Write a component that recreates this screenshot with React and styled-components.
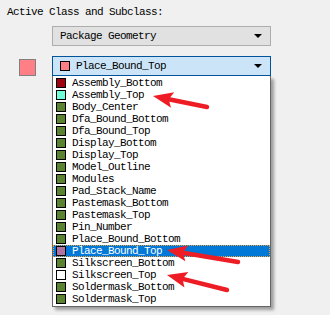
import styled, { createGlobalStyle } from "styled-components";

const GlobalStyle = createGlobalStyle`
  body {
    margin: 0;
    background: #f0f0f0;
    font-family: "Liberation Mono", "DejaVu Sans Mono", monospace;
  }
`;

const items = [
  { name: "Assembly_Bottom", color: "#a0000f" },
  { name: "Assembly_Top", color: "#6fffd9" },
  { name: "Body_Center", color: "#5b8231" },
  { name: "Dfa_Bound_Bottom", color: "#5b8231" },
  { name: "Dfa_Bound_Top", color: "#5b8231" },
  { name: "Display_Bottom", color: "#5b8231" },
  { name: "Display_Top", color: "#5b8231" },
  { name: "Model_Outline", color: "#5b8231" },
  { name: "Modules", color: "#5b8231" },
  { name: "Pad_Stack_Name", color: "#5b8231" },
  { name: "Pastemask_Bottom", color: "#5b8231" },
  { name: "Pastemask_Top", color: "#5b8231" },
  { name: "Pin_Number", color: "#5b8231" },
  { name: "Place_Bound_Bottom", color: "#5b8231" },
  { name: "Place_Bound_Top", color: "#b073a3", selected: true },
  { name: "Silkscreen_Bottom", color: "#5b8231" },
  { name: "Silkscreen_Top", color: "#ffffff" },
  { name: "Soldermask_Bottom", color: "#5b8231" },
  { name: "Soldermask_Top", color: "#5b8231" },
];

export default function App() {
  return (
    <Page>
      <GlobalStyle />
      <Label>Active Class and Subclass:</Label>
      <ClassRow>
        <Combo>
          <ComboText>Package Geometry</ComboText>
          <Caret />
        </Combo>
      </ClassRow>
      <SubclassRow>
        <BigSwatch />
        <Combo $active>
          <Swatch $color="#ff7f86" />
          <ComboText>Place_Bound_Top</ComboText>
          <Caret />
          <List>
            {items.map((it) => (
              <Item key={it.name} $selected={it.selected}>
                <Swatch $color={it.color} />
                <ItemText>{it.name}</ItemText>
              </Item>
            ))}
          </List>
        </Combo>
      </SubclassRow>
      <Arrows width="330" height="315" viewBox="0 0 330 315">
        <Arrow x1={207} y1={107} x2={153} y2={96} />
        <Arrow x1={238} y1={262} x2={167} y2={250} />
        <Arrow x1={227} y1={290} x2={167} y2={275} />
      </Arrows>
    </Page>
  );
}

function Arrow({ x1, y1, x2, y2 }) {
  const dx = x2 - x1;
  const dy = y2 - y1;
  const len = Math.hypot(dx, dy);
  const ux = dx / len;
  const uy = dy / len;
  const headLen = 20;
  const headW = 8;
  const bx = x2 - ux * headLen;
  const by = y2 - uy * headLen;
  const px = -uy;
  const py = ux;
  const pts = [
    [x2, y2],
    [bx + px * headW, by + py * headW],
    [bx + ux * 4, by + uy * 4],
    [bx - px * headW, by - py * headW],
  ]
    .map((p) => p.join(","))
    .join(" ");
  return (
    <g>
      <line
        x1={x1}
        y1={y1}
        x2={bx + ux * 4}
        y2={by + uy * 4}
        stroke="#ee1c25"
        strokeWidth="4.5"
        strokeLinecap="round"
      />
      <polygon points={pts} fill="#ee1c25" />
    </g>
  );
}

const Page = styled.div`
  position: relative;
  width: 330px;
  height: 315px;
  padding-top: 5px;
  box-sizing: border-box;
`;

const Label = styled.div`
  margin-left: 7px;
  height: 15px;
  font-size: 11px;
  letter-spacing: -0.6px;
  line-height: 15px;
  color: #000;
`;

const ClassRow = styled.div`
  display: flex;
  padding-left: 52px;
  margin-top: 6px;
`;

const SubclassRow = styled.div`
  display: flex;
  align-items: flex-start;
  padding-left: 19px;
  margin-top: 10px;
`;

const BigSwatch = styled.div`
  width: 15px;
  height: 15px;
  margin-top: 3px;
  margin-right: 16px;
  background: #ff7f86;
  border: 1px solid #808080;
`;

const Combo = styled.div`
  position: relative;
  display: flex;
  align-items: center;
  gap: 6px;
  width: 219px;
  height: 20px;
  box-sizing: border-box;
  padding: 0 7px;
  background: ${(p) => (p.$active ? "#cce4f7" : "#e1e1e1")};
  border: 1px solid ${(p) => (p.$active ? "#005499" : "#adadad")};
  font-size: 11px;
  letter-spacing: -0.6px;
  color: #000;
`;

const ComboText = styled.span`
  flex: 1;
  line-height: 18px;
`;

const Caret = styled.span`
  width: 0;
  height: 0;
  margin-right: 1px;
  border-left: 4px solid transparent;
  border-right: 4px solid transparent;
  border-top: 4px solid #000;
`;

const Swatch = styled.span`
  flex: none;
  width: 8px;
  height: 8px;
  background: ${(p) => p.$color};
  border: 1px solid #000;
`;

const List = styled.div`
  position: absolute;
  left: -1px;
  top: 19px;
  width: 219px;
  box-sizing: border-box;
  padding: 1px 0 1px;
  background: #fff;
  border: 1px solid #646464;
  border-top: none;
  box-shadow: 3px 3px 3px rgba(0, 0, 0, 0.35);
`;

const Item = styled.div`
  display: flex;
  align-items: center;
  gap: 6px;
  height: 12px;
  padding-left: 3px;
  box-sizing: border-box;
  background: ${(p) => (p.$selected ? "#0078d7" : "transparent")};
  color: ${(p) => (p.$selected ? "#fff" : "#000")};
  outline: ${(p) => (p.$selected ? "1px dotted #f0a030" : "none")};
  outline-offset: -1px;
`;

const ItemText = styled.span`
  line-height: 12px;
`;

const Arrows = styled.svg`
  position: absolute;
  left: 0;
  top: 0;
  pointer-events: none;
`;
